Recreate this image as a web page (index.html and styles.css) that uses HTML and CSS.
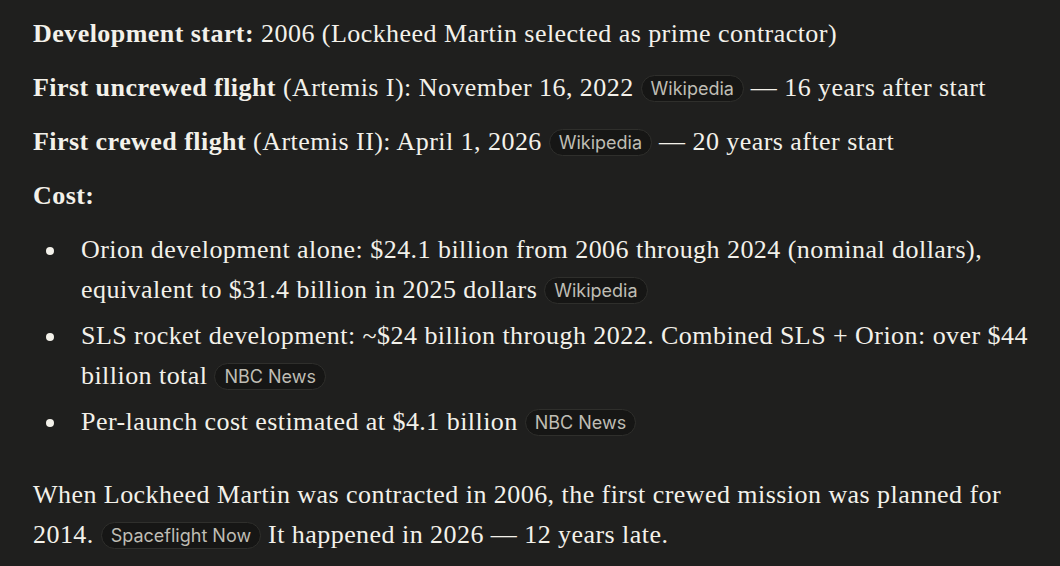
FILE: index.html
```html
<!DOCTYPE html>
<html lang="en">
<head>
<meta charset="utf-8">
<link rel="stylesheet" href="styles.css">
</head>
<body>
<main class="answer">
  <p class="para"><strong>Development start:</strong> 2006 (Lockheed Martin selected as prime contractor)</p>
  <p class="para"><strong>First uncrewed flight</strong> (Artemis I): November 16, 2022 <span class="chip">Wikipedia</span> — 16 years after start</p>
  <p class="para"><strong>First crewed flight</strong> (Artemis II): April 1, 2026 <span class="chip">Wikipedia</span> — 20 years after start</p>
  <p class="para"><strong>Cost:</strong></p>
  <ul class="list">
    <li class="item">Orion development alone: $24.1 billion from 2006 through 2024 (nominal dollars), equivalent to $31.4 billion in 2025 dollars <span class="chip">Wikipedia</span></li>
    <li class="item">SLS rocket development: ~$24 billion through 2022. Combined SLS + Orion: over $44 billion total <span class="chip">NBC News</span></li>
    <li class="item">Per-launch cost estimated at $4.1 billion <span class="chip">NBC News</span></li>
  </ul>
  <p class="para">When Lockheed Martin was contracted in 2006, the first crewed mission was planned for 2014. <span class="chip">Spaceflight Now</span> It happened in 2026 — 12 years late.</p>
</main>
</body>
</html>
```
FILE: styles.css
```css
html, body {
  margin: 0;
  padding: 0;
  background: #1f1f1e;
}
.answer {
  padding: 14px 10px 0 33px;
  color: #f3f1ea;
  font-family: "Liberation Serif", "DejaVu Serif", serif;
  font-size: 26px;
  line-height: 40px;
  letter-spacing: 0.45px;
}
.para {
  margin: 0 0 14px;
}
.para strong {
  font-weight: 700;
}
.list {
  margin: 0 0 33px;
  padding-left: 17px;
  list-style: none;
}
.item {
  margin: 0 0 6px;
  padding-left: 31px;
}
.item::before {
  content: "";
  display: inline-block;
  width: 8px;
  height: 8px;
  border-radius: 50%;
  background: #f3f1ea;
  margin-left: -35px;
  margin-right: 27px;
  vertical-align: 3px;
}
.chip {
  display: inline-block;
  font-family: "Inter", "Liberation Sans", sans-serif;
  font-size: 18px;
  line-height: 25px;
  letter-spacing: 0;
  padding: 0 9px;
  border: 1px solid #2f2f2c;
  border-radius: 14px;
  background: #161615;
  color: #bfbdb4;
  vertical-align: 1px;
}
```
